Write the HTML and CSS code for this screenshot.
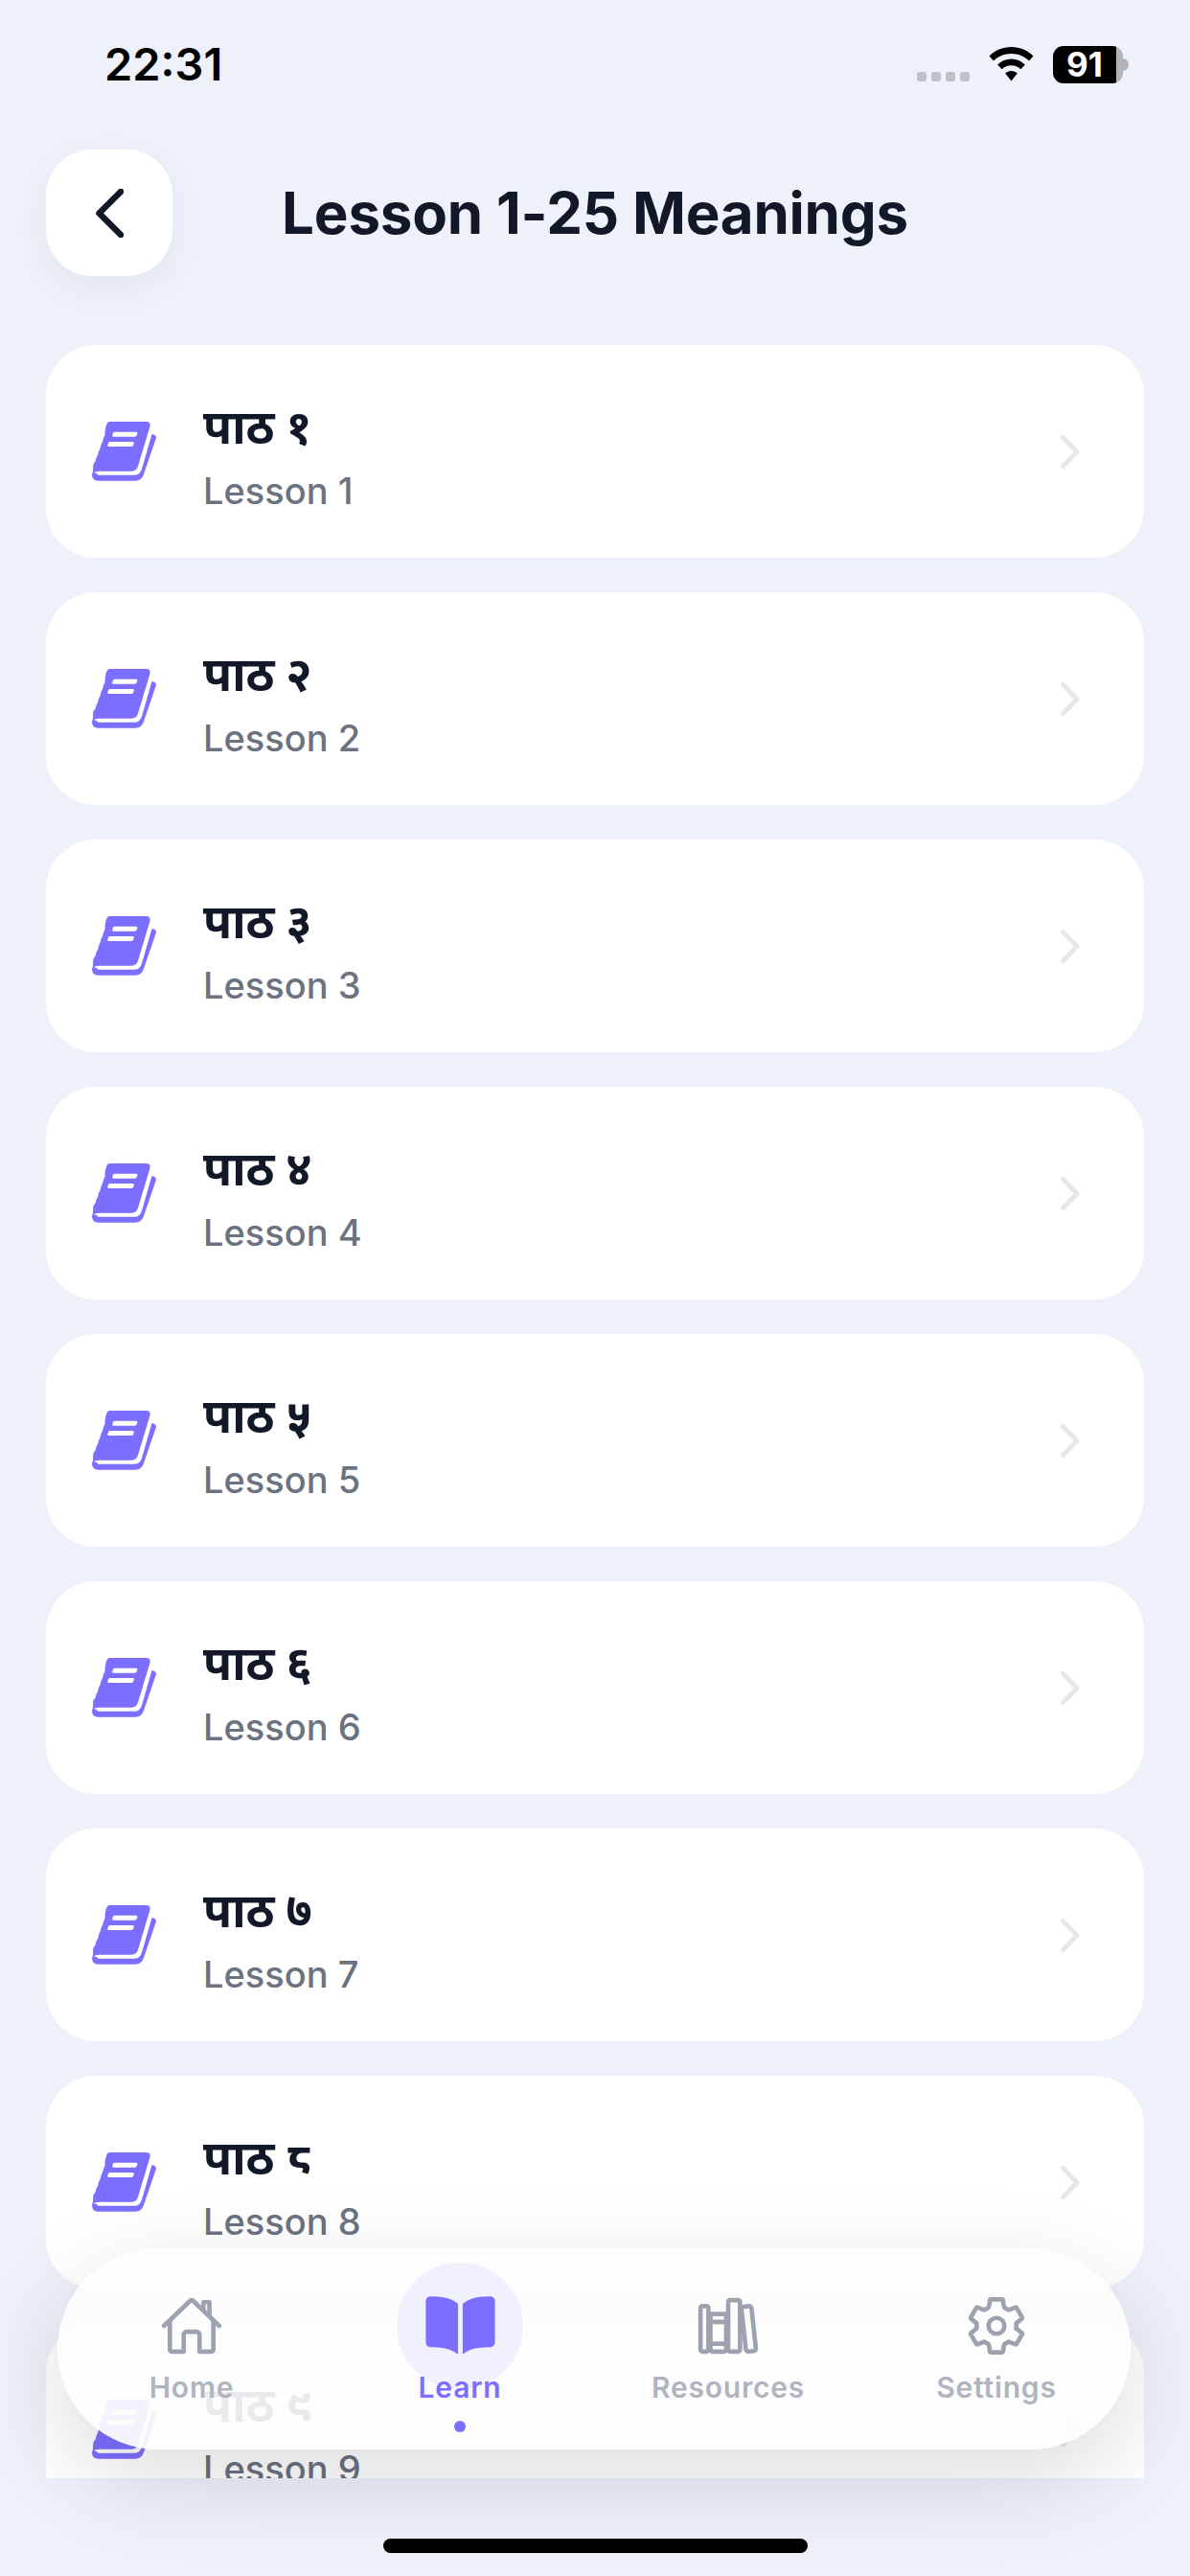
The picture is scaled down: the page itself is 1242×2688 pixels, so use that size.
FILE: index.html
```html
<!DOCTYPE html>
<html lang="ne">
<head>
<meta charset="utf-8">
<title>Lesson 1-25 Meanings</title>
<link rel="stylesheet" href="styles.css">
</head>
<body>
<svg class="sprite" width="0" height="0" aria-hidden="true">
  <defs>
    <symbol id="book" viewBox="0 0 68 64">
      <path class="book-fill" d="M18.500 1H56.500Q61.500 1 60.500 6L48 47.500Q46.300 52.700 41.500 52.700H7.500Q3.500 52.700 0.800 55L1.300 46Q2 44 3.500 42.500Q4.500 38 6 36Q7 31 8.500 29Q9.500 24 11 22Q12 17 13.500 15Q13.500 8 15 4.500Q16 1 18.500 1Z"/>
      <path class="book-fill" d="M0.500 54L0 56Q0 62.700 6.500 62.700H45Q51.500 62.700 53.800 56.500L66.800 18.500Q67.500 15.500 64.500 14.500L62.500 14L52 50.500Q50 56.800 44 56.800H7Q5 56.800 5.200 55Z"/>
      <path class="book-line" d="M23.500 11.700H46Q47.800 11.700 47.300 13.500L46.800 15Q46.300 16.700 44.500 16.700H22.500Q20.800 16.700 21.300 15L21.800 13.500Q22.200 11.700 23.500 11.700ZM18.500 22H42.500Q44.300 22 43.800 23.800L43.300 25.300Q42.800 27 41 27H17.500Q15.800 27 16.300 25.300L16.800 23.800Q17.200 22 18.500 22Z"/>
    </symbol>
    <symbol id="chev" viewBox="0 0 20 35">
      <path class="chev-path" d="M2.500 2.500L17 17.500L2.500 32.500"/>
    </symbol>
  </defs>
</svg>
<div class="screen">
  <div class="status">
    <span class="time">22:31</span>
    <div class="status-icons">
      <div class="dots"><i></i><i></i><i></i><i></i></div>
      <svg class="wifi" viewBox="0 0 47 36"><path d="M23.500 0C14.500 0 6.500 3.500 0.500 9.500L5 14.500C10 9.700 16.500 7 23.500 7S37 9.700 42 14.500L46.500 9.500C40.500 3.500 32.500 0 23.500 0Z"/><path d="M23.500 12.500C18 12.500 13 14.700 9.200 18.500L13.700 23.300C16.300 20.800 19.700 19.300 23.500 19.300S30.700 20.800 33.300 23.300L37.800 18.500C34 14.700 29 12.500 23.500 12.500Z"/><path d="M23.500 25C21 25 18.800 26 17.200 27.600L23.500 35.500L29.800 27.600C28.200 26 26 25 23.500 25Z"/></svg>
      <div class="battery"><div class="battery-body"><span class="battery-num">91</span></div><div class="battery-nub"></div></div>
    </div>
  </div>

  <header class="header">
    <button class="back" type="button" aria-label="Back">
      <svg class="back-icon" viewBox="0 0 29 51"><path d="M26 3L3.500 25.500L26 48"/></svg>
    </button>
    <h1 class="title">Lesson 1-25 Meanings</h1>
    <div class="header-spacer"></div>
  </header>

  <main class="list">
    <a class="card"><svg class="book"><use href="#book"/></svg><div class="card-text"><div class="card-title">पाठ १</div><div class="card-sub">Lesson 1</div></div><svg class="chevron"><use href="#chev"/></svg></a>
    <a class="card"><svg class="book"><use href="#book"/></svg><div class="card-text"><div class="card-title">पाठ २</div><div class="card-sub">Lesson 2</div></div><svg class="chevron"><use href="#chev"/></svg></a>
    <a class="card"><svg class="book"><use href="#book"/></svg><div class="card-text"><div class="card-title">पाठ ३</div><div class="card-sub">Lesson 3</div></div><svg class="chevron"><use href="#chev"/></svg></a>
    <a class="card"><svg class="book"><use href="#book"/></svg><div class="card-text"><div class="card-title">पाठ ४</div><div class="card-sub">Lesson 4</div></div><svg class="chevron"><use href="#chev"/></svg></a>
    <a class="card"><svg class="book"><use href="#book"/></svg><div class="card-text"><div class="card-title">पाठ ५</div><div class="card-sub">Lesson 5</div></div><svg class="chevron"><use href="#chev"/></svg></a>
    <a class="card"><svg class="book"><use href="#book"/></svg><div class="card-text"><div class="card-title">पाठ ६</div><div class="card-sub">Lesson 6</div></div><svg class="chevron"><use href="#chev"/></svg></a>
    <a class="card"><svg class="book"><use href="#book"/></svg><div class="card-text"><div class="card-title">पाठ ७</div><div class="card-sub">Lesson 7</div></div><svg class="chevron"><use href="#chev"/></svg></a>
    <a class="card"><svg class="book"><use href="#book"/></svg><div class="card-text"><div class="card-title">पाठ ८</div><div class="card-sub">Lesson 8</div></div><svg class="chevron"><use href="#chev"/></svg></a>
    <a class="card"><svg class="book"><use href="#book"/></svg><div class="card-text"><div class="card-title">पाठ ९</div><div class="card-sub">Lesson 9</div></div><svg class="chevron"><use href="#chev"/></svg></a>
  </main>

  <div class="home-zone"><div class="home-indicator"></div></div>

  <nav class="tabbar">
    <a class="tab">
      <span class="tab-icon">
        <svg class="line-icon" viewBox="0 0 512 512"><path d="M80 212v236a16 16 0 0016 16h96V328a24 24 0 0124-24h80a24 24 0 0124 24v136h96a16 16 0 0016-16V212"/><path d="M480 256L266.890 52c-5-5.280-16.690-5.340-22 0L32 256M400 179V64h-48v69"/></svg>
      </span>
      <span class="tab-label">Home</span>
    </a>
    <a class="tab tab-active">
      <span class="tab-icon">
        <span class="tab-halo"></span>
        <svg class="fill-icon" viewBox="0 0 512 512"><path d="M202.240 74C166.110 56.750 115.610 48.300 48 48a31.360 31.360 0 00-17.920 5.330A32 32 0 0016 79.900V366c0 19.340 13.760 33.930 32 33.930 71.070 0 142.360 6.640 185.060 47a4.110 4.110 0 006.940-3V106.820a15.890 15.890 0 00-5.460-12A143 143 0 00202.240 74zM481.920 53.300A31.330 31.330 0 00464 48c-67.610.3-118.110 8.710-154.240 26a143.310 143.310 0 00-32.310 20.780 15.930 15.930 0 00-5.450 12v337.130a3.930 3.930 0 006.680 2.810c25.670-25.500 70.720-46.820 185.360-46.810a32 32 0 0032-32v-288a32 32 0 00-14.120-26.610z"/></svg>
      </span>
      <span class="tab-label">Learn</span>
      <span class="tab-dot"></span>
    </a>
    <a class="tab">
      <span class="tab-icon">
        <svg class="line-icon" viewBox="0 0 512 512"><rect x="32" y="96" width="64" height="368" rx="16" ry="16"/><path d="M112 224h128M112 400h128"/><rect x="112" y="160" width="128" height="304" rx="16" ry="16"/><rect x="256" y="48" width="96" height="416" rx="16" ry="16"/><path d="M422.460 96.110l-40.400 4.250c-11.120 1.170-19.180 11.570-17.900 23.100l34.920 321.590c1.260 11.530 11.370 20 22.490 18.840l40.400-4.250c11.120-1.170 19.180-11.570 17.900-23.100L445 115c-1.310-11.580-11.420-20.060-22.540-18.890z"/></svg>
      </span>
      <span class="tab-label">Resources</span>
    </a>
    <a class="tab">
      <span class="tab-icon">
        <svg class="line-icon" viewBox="0 0 512 512"><path d="M262.290 192.310a64 64 0 1057.400 57.400 64.130 64.130 0 00-57.400-57.400zM416.390 256a154.340 154.340 0 01-1.530 20.790l45.210 35.460a10.810 10.810 0 012.450 13.750l-42.770 74a10.810 10.810 0 01-13.140 4.590l-44.900-18.080a16.110 16.110 0 00-15.170 1.750A164.480 164.480 0 01325 400.800a15.940 15.940 0 00-8.820 12.140l-6.730 47.890a11.080 11.080 0 01-10.680 9.170h-85.540a11.110 11.110 0 01-10.690-8.870l-6.720-47.820a16.070 16.070 0 00-9-12.220 155.300 155.300 0 01-21.460-12.570 16 16 0 00-15.110-1.710l-44.890 18.070a10.810 10.810 0 01-13.140-4.580l-42.770-74a10.800 10.800 0 012.450-13.750l38.210-30a16.050 16.050 0 006-14.080c-.36-4.170-.58-8.330-.58-12.500s.21-8.270.58-12.350a16 16 0 00-6.070-13.940l-38.190-30A10.810 10.810 0 0149.480 186l42.770-74a10.810 10.810 0 0113.140-4.590l44.900 18.080a16.110 16.110 0 0015.170-1.750A164.480 164.480 0 01187 111.200a15.940 15.940 0 008.820-12.140l6.730-47.890A11.080 11.080 0 01213.230 42h85.540a11.110 11.110 0 0110.690 8.870l6.720 47.820a16.070 16.070 0 009 12.220 155.300 155.300 0 0121.460 12.570 16 16 0 0015.110 1.710l44.890-18.070a10.810 10.810 0 0113.140 4.580l42.770 74a10.800 10.800 0 01-2.450 13.750l-38.210 30a16.050 16.050 0 00-6.050 14.080c.33 4.140.55 8.300.55 12.470z"/></svg>
      </span>
      <span class="tab-label">Settings</span>
    </a>
  </nav>
</div>
</body>
</html>
```
FILE: styles.css
```css
* { box-sizing: border-box; margin: 0; padding: 0; }
html, body { height: 100%; }
body {
  background: #eef1fa;
  font-family: "Inter", "Noto Sans", "Noto Sans Devanagari", sans-serif;
  color: #111827;
}
.sprite { position: absolute; }
.screen {
  position: relative;
  width: 1242px;
  height: 2688px;
  display: flex;
  flex-direction: column;
  overflow: hidden;
}

/* status bar */
.status {
  height: 156px;
  flex: none;
  display: flex;
  justify-content: space-between;
  align-items: flex-start;
  padding: 40px 64px 0 109px;
}
.time {
  font-size: 47px;
  line-height: 54px;
  font-weight: 600;
  color: #000;
}
.status-icons {
  display: flex;
  align-items: flex-start;
  padding-top: 8px;
}
.dots {
  display: flex;
  gap: 5px;
  margin-top: 27px;
}
.dots i {
  width: 10px;
  height: 10px;
  border-radius: 3px;
  background: #c0c1c6;
}
.wifi {
  width: 47px;
  height: 36px;
  margin: 1px 0 0 20px;
  fill: #000;
}
.battery {
  display: flex;
  align-items: center;
  margin-left: 20px;
}
.battery-body {
  width: 73px;
  height: 39px;
  border-radius: 11px;
  background: linear-gradient(90deg, #000 0, #000 90%, #b3b3b8 90%);
  display: flex;
  align-items: center;
  justify-content: center;
  padding-right: 7px;
}
.battery-num {
  color: #fff;
  font-size: 35px;
  line-height: 39px;
  font-weight: 700;
}
.battery-nub {
  width: 6px;
  height: 13px;
  border-radius: 0 7px 7px 0;
  background: #b3b3b8;
}

/* header */
.header {
  flex: none;
  height: 204px;
  display: flex;
  align-items: flex-start;
  padding: 0 48px;
}
.back {
  width: 132px;
  height: 132px;
  flex: none;
  border: 0;
  border-radius: 48px;
  background: #fff;
  box-shadow: 0 12px 40px rgba(17, 24, 39, 0.05);
  display: flex;
  align-items: center;
  justify-content: center;
}
.back-icon {
  width: 29px;
  height: 51px;
  margin-top: 1px;
  fill: none;
  stroke: #111827;
  stroke-width: 6.5;
  stroke-linecap: round;
  stroke-linejoin: round;
}
.title {
  flex: 1;
  text-align: center;
  font-size: 60px;
  line-height: 132px;
  font-weight: 700;
  letter-spacing: -0.2px;
  color: #111827;
}
.header-spacer { width: 132px; flex: none; }

/* list */
.list {
  flex: 1;
  min-height: 0;
  overflow: hidden;
  padding: 0 48px;
  display: flex;
  flex-direction: column;
  gap: 36px;
}
.card {
  flex: none;
  height: 222px;
  border-radius: 52px;
  background: #fff;
  display: flex;
  align-items: center;
  padding: 0 67px 0 48px;
}
.book {
  width: 68px;
  height: 64px;
  flex: none;
  margin-right: 48px;
}
.book-fill { fill: #7c6fff; }
.book-line { fill: #fff; }
.card-text { flex: 1; min-width: 0; padding-top: 11px; }
.card-title {
  font-size: 49px;
  line-height: 60px;
  font-weight: 700;
  color: #111827;
}
.card-sub {
  font-size: 38px;
  line-height: 50px;
  font-weight: 500;
  margin-top: 11px;
  color: #6b7280;
}
.chevron { width: 20px; height: 35px; flex: none; }
.chev-path {
  fill: none;
  stroke: #e5e7eb;
  stroke-width: 5;
  stroke-linecap: round;
  stroke-linejoin: round;
}

/* home indicator */
.home-zone {
  flex: none;
  height: 102px;
  padding-top: 63px;
  display: flex;
  justify-content: center;
}
.home-indicator {
  position: relative;
  z-index: 2;
  width: 443px;
  height: 15px;
  border-radius: 8px;
  background: #000;
}

/* tab bar floats over the list */
.tabbar {
  position: absolute;
  left: 60px;
  top: 2346px;
  width: 1120px;
  height: 210px;
  border-radius: 105px;
  background: rgba(253, 253, 253, 0.92);
  box-shadow: 0 30px 100px rgba(0, 0, 0, 0.14);
  display: grid;
  grid-template-columns: repeat(4, 1fr);
}
.tab {
  display: flex;
  flex-direction: column;
  align-items: center;
  padding-top: 48px;
}
.tab-icon {
  position: relative;
  width: 66px;
  height: 66px;
  display: flex;
  align-items: center;
  justify-content: center;
}
.tab-halo {
  position: absolute;
  left: -33px;
  top: -33px;
  width: 132px;
  height: 132px;
  border-radius: 50%;
  background: #f1f0ff;
}
.line-icon {
  width: 66px;
  height: 66px;
  fill: none;
  stroke: #9ca3af;
  stroke-width: 36;
  stroke-linecap: round;
  stroke-linejoin: round;
}
.fill-icon {
  position: relative;
  flex: none;
  width: 77px;
  height: 77px;
  fill: #7c6fff;
}
.tab-label {
  position: relative;
  margin-top: 13px;
  font-size: 30px;
  line-height: 36px;
  font-weight: 600;
  letter-spacing: 0.8px;
  color: #afb4bf;
}
.tab-active .tab-label { color: #7c6fff; }
.tab-dot {
  width: 12px;
  height: 12px;
  margin-top: 17px;
  border-radius: 50%;
  background: #7c6fff;
}
```
